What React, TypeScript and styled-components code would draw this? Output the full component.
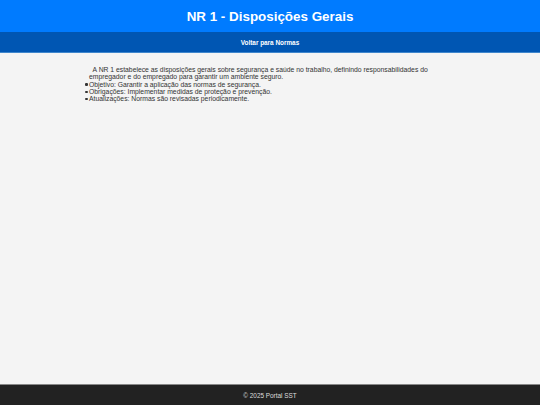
import React from "react";
import styled, { createGlobalStyle } from "styled-components";

const Global = createGlobalStyle`
  html, body { margin: 0; padding: 0; height: 100%; }
  body { background: #f4f4f4; font-family: "Liberation Sans", Arial, sans-serif; }
  #root { height: 100%; }
`;

const Page = styled.div`
  display: flex;
  flex-direction: column;
  min-height: 405px;
  height: 100%;
`;

const Header = styled.header`
  background: #007bff;
  color: #fff;
  height: 32px;
  display: flex;
  align-items: center;
  justify-content: center;
`;

const Title = styled.h1`
  margin: 0;
  font-size: 13.4px;
  font-weight: bold;
`;

const Nav = styled.nav`
  background: #0056b3;
  height: 20px;
  border-bottom: 1px solid #3f86cc;
  display: flex;
  align-items: center;
  justify-content: center;
`;

const NavLink = styled.a`
  color: #fff;
  font-size: 6.4px;
  font-weight: bold;
  text-decoration: none;
`;

const Main = styled.main`
  flex: 1;
  width: 362px;
  margin: 0 auto;
  padding-top: 13px;
  color: #333;
  font-size: 6.8px;
  line-height: 7.3px;
`;

const Intro = styled.p`
  margin: 0;
  text-indent: 3.6px;
`;

const List = styled.ul`
  margin: 0;
  padding: 0;
  list-style: none;
`;

const Item = styled.li`
  position: relative;
  &::before {
    content: "";
    position: absolute;
    left: -3.6px;
    top: 2.8px;
    width: 2.2px;
    height: 2.2px;
    border-radius: 50%;
    background: #333;
  }
`;

const Footer = styled.footer`
  background: #222;
  border-top: 1px solid #888;
  height: 20px;
  display: flex;
  align-items: center;
  justify-content: center;
  color: #ddd;
  font-size: 6.4px;
`;

export default function App() {
  return (
    <>
      <Global />
      <Page>
        <Header>
          <Title>NR 1 - Disposições Gerais</Title>
        </Header>
        <Nav>
          <NavLink href="#">Voltar para Normas</NavLink>
        </Nav>
        <Main>
          <Intro>
            A NR 1 estabelece as disposições gerais sobre segurança e saúde no trabalho, definindo
            responsabilidades do empregador e do empregado para garantir um ambiente seguro.
          </Intro>
          <List>
            <Item>Objetivo: Garantir a aplicação das normas de segurança.</Item>
            <Item>Obrigações: Implementar medidas de proteção e prevenção.</Item>
            <Item>Atualizações: Normas são revisadas periodicamente.</Item>
          </List>
        </Main>
        <Footer>© 2025 Portal SST</Footer>
      </Page>
    </>
  );
}
